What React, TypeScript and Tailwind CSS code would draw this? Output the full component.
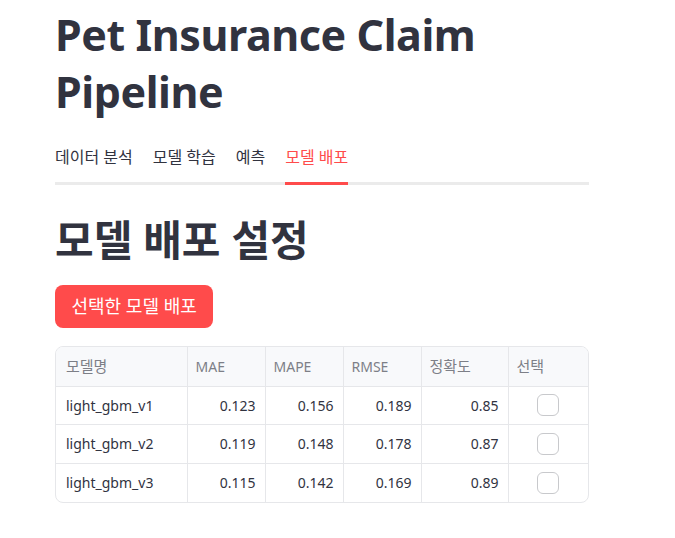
import { useState } from "react";

const ROWS = [
  { name: "light_gbm_v1", mae: "0.123", mape: "0.156", rmse: "0.189", acc: "0.85" },
  { name: "light_gbm_v2", mae: "0.119", mape: "0.148", rmse: "0.178", acc: "0.87" },
  { name: "light_gbm_v3", mae: "0.115", mape: "0.142", rmse: "0.169", acc: "0.89" },
];

const TABS = ["데이터 분석", "모델 학습", "예측", "모델 배포"];

export default function App() {
  const [checked, setChecked] = useState<boolean[]>([false, false, false]);

  return (
    <div
      className="min-h-screen bg-white text-[#31333f]"
      style={{ fontFamily: '"Noto Sans", "Noto Sans CJK KR", sans-serif' }}
    >
      <div className="ml-[55px] w-[534px] pt-[6px]">
        {/* title */}
        <h1 className="text-[43px] font-bold leading-[57px] tracking-[-0.01em]">
          Pet Insurance Claim Pipeline
        </h1>

        {/* tabs */}
        <div className="mt-[26px] flex gap-[20px] border-b-[3px] border-[#ebebeb]">
          {TABS.map((t, i) => (
            <div
              key={t}
              className={`-mb-[3px] pb-[14px] text-[16px] leading-[22px] ${
                i === 3 ? "border-b-[3px] border-[#ff4b4b] text-[#ff4b4b]" : "border-b-[3px] border-transparent"
              }`}
            >
              {t}
            </div>
          ))}
        </div>

        {/* section header */}
        <h2 className="mt-[29px] text-[42px] font-bold leading-[52px]">모델 배포 설정</h2>

        <button className="mt-[19px] h-[43px] rounded-[8px] bg-[#ff4b4b] px-[16.5px] text-[18px] text-white">
          선택한 모델 배포
        </button>

        {/* table */}
        <div className="mt-[18px] overflow-hidden rounded-[8px] border border-[#e6e7ea]">
          <table className="w-full table-fixed border-collapse text-[14px]">
            <colgroup>
              <col className="w-[131px]" />
              <col className="w-[78px]" />
              <col className="w-[78px]" />
              <col className="w-[78px]" />
              <col className="w-[87px]" />
              <col />
            </colgroup>
            <thead>
              <tr className="h-[39px] bg-[#f8f9fb] text-[#7d7f87]">
                <th className="px-[10px] text-left text-[15px] font-normal">모델명</th>
                <th className="border-l border-[#e6e7ea] px-[8px] text-left font-normal">MAE</th>
                <th className="border-l border-[#e6e7ea] px-[8px] text-left font-normal">MAPE</th>
                <th className="border-l border-[#e6e7ea] px-[8px] text-left font-normal">RMSE</th>
                <th className="border-l border-[#e6e7ea] px-[8px] text-left text-[15px] font-normal">정확도</th>
                <th className="border-l border-[#e6e7ea] px-[8px] text-left text-[15px] font-normal">선택</th>
              </tr>
            </thead>
            <tbody>
              {ROWS.map((r, i) => (
                <tr key={r.name} className="h-[38.5px] border-t border-[#e6e7ea]">
                  <td className="px-[10px]">{r.name}</td>
                  <td className="border-l border-[#e6e7ea] px-[9px] text-right">{r.mae}</td>
                  <td className="border-l border-[#e6e7ea] px-[9px] text-right">{r.mape}</td>
                  <td className="border-l border-[#e6e7ea] px-[9px] text-right">{r.rmse}</td>
                  <td className="border-l border-[#e6e7ea] px-[9px] text-right">{r.acc}</td>
                  <td className="border-l border-[#e6e7ea]">
                    <div className="flex justify-center">
                      <button
                        onClick={() => setChecked((c) => c.map((v, j) => (j === i ? !v : v)))}
                        className={`size-[22px] rounded-[6px] border ${
                          checked[i] ? "border-[#ff4b4b] bg-[#ff4b4b]" : "border-[#c8c9cc] bg-white"
                        }`}
                      />
                    </div>
                  </td>
                </tr>
              ))}
            </tbody>
          </table>
        </div>
      </div>
    </div>
  );
}
